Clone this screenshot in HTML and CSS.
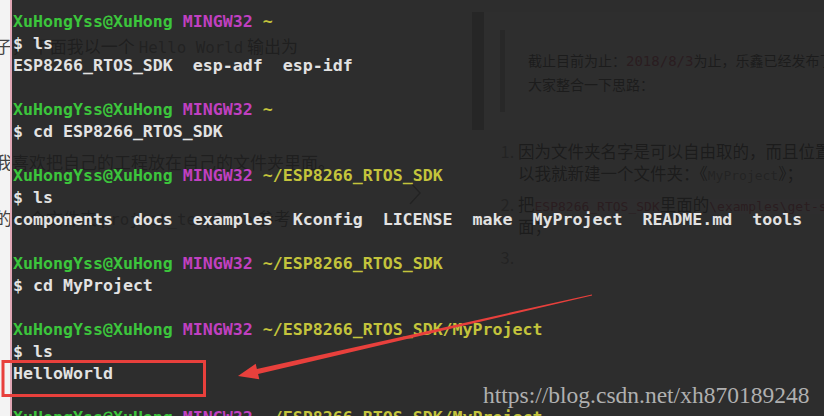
FILE: index.html
```html
<!DOCTYPE html>
<html lang="zh-CN">
<head>
  <meta charset="UTF-8">
  <title>MINGW32 ~/ESP8266_RTOS_SDK/MyProject</title>
  <link rel="stylesheet" href="styles.css">
</head>
<body>
  <!-- 背后的博客编辑器：左边源码，右边预览 -->
  <div class="editor">
    <section class="source">
      <p>子，&nbsp;下面我以一个 <code>Hello World</code> 输出为</p>
      <p>我喜欢把自己的工程放在自己的文件夹里面。</p>
      <p>的一个文件夹 <code>project_template</code> 参考</p>
    </section>
    <div class="splitter">
      <svg width="16" height="26" viewBox="0 0 16 26"><polyline points="3,2 13,13 3,24"/></svg>
    </div>
    <section class="preview">
      <blockquote class="note">
        <blockquote>截止目前为止：<code>2018/8/3</code>为止，乐鑫已经发布了 ESP8266_RTOS_SDK 的 3.0 版本，所以下面给<br>大家整合一下思路：</blockquote>
      </blockquote>
      <ol class="steps">
        <li>因为文件夹名字是可以自由取的，而且位置也是可以随意放置的，所<br>以我就新建一个文件夹：《<code>MyProject</code>》；</li>
        <li>把<code class="red">ESP8266_RTOS_SDK</code>里面的<code class="red">\examples\get-started\project_template</code>拷贝到这个文件夹里<br>面；</li>
        <li></li>
      </ol>
    </section>
  </div>

  <!-- 半透明的终端窗口 -->
  <pre class="terminal"><span class="user">XuHongYss@XuHong</span> <span class="host">MINGW32</span> <span class="path">~</span>
$ ls
ESP8266_RTOS_SDK  esp-adf  esp-idf

<span class="user">XuHongYss@XuHong</span> <span class="host">MINGW32</span> <span class="path">~</span>
$ cd ESP8266_RTOS_SDK

<span class="user">XuHongYss@XuHong</span> <span class="host">MINGW32</span> <span class="path">~/ESP8266_RTOS_SDK</span>
$ ls
components  docs  examples  Kconfig  LICENSE  make  MyProject  README.md  tools

<span class="user">XuHongYss@XuHong</span> <span class="host">MINGW32</span> <span class="path">~/ESP8266_RTOS_SDK</span>
$ cd MyProject

<span class="user">XuHongYss@XuHong</span> <span class="host">MINGW32</span> <span class="path">~/ESP8266_RTOS_SDK/MyProject</span>
$ ls
HelloWorld

<span class="user">XuHongYss@XuHong</span> <span class="host">MINGW32</span> <span class="path">~/ESP8266_RTOS_SDK/MyProject</span></pre>

  <!-- 标注：红框和箭头 -->
  <svg class="marks" width="824" height="416" viewBox="0 0 824 416">
    <rect x="3" y="361.5" width="201.5" height="34" />
    <polygon points="591.9,294.4 256.9,369.1 255.7,363.7 238,376 259.3,379.3 258.1,373.9 592.1,295.6" />
  </svg>

  <div class="watermark">https://blog.csdn.net/xh870189248</div>
</body>
</html>
```

FILE: styles.css
```css
body{
  margin: 0;
  width: 824px;
  height: 416px;
  overflow: hidden;
  position: relative;
  background: #f3f3f3;
  font-family: "Noto Sans CJK SC", sans-serif;
}

/*背后的编辑器*/
.editor{
  display: flex;
  width: 1200px;
  margin-left: -5px;
}
.source{
  flex: none;
  width: 410px;
  padding-top: 32px;
  font-size: 17px;
  line-height: 28px;
  color: #444;
}
.source p{
  margin: 0 0 28px;
  white-space: nowrap;
}
.source p:first-child{
  margin-bottom: 88px;
}
.source code{
  font-family: "DejaVu Sans Mono", monospace;
  font-size: 15.8px;
  line-height: 1;
  color: #666;
}
.splitter{
  flex: none;
  width: 67px;
  box-sizing: border-box;
  padding: 180px 0 0 2px;
}
.splitter polyline{
  fill: none;
  stroke: #6a6a6a;
  stroke-width: 1.5;
}
.preview{
  flex: none;
  width: 720px;
  padding-top: 12px;
}
.note{
  margin: 0;
  padding: 18px 0 18px 16px;
  border-left: 12px solid #999;
  background: #f8f8f8;
}
.note blockquote{
  margin: 0;
  padding: 18px 0 16px 23px;
  border-left: 5px solid #b3b3b3;
  font-size: 14px;
  line-height: 24px;
  color: #1e1e1e;
  white-space: nowrap;
}
.note code{
  font-family: "DejaVu Sans Mono", monospace;
  font-size: 14px;
  line-height: 1;
  color: #c7254e;
}
.steps{
  margin: 10px 0 0;
  padding-left: 46px;
  font-size: 16.5px;
  line-height: 22px;
  color: #222;
  white-space: nowrap;
}
.steps li + li{
  margin-top: 9px;
}
.steps li::marker{
  color: #777;
}
.steps code{
  font-family: "DejaVu Sans Mono", monospace;
  font-size: 13px;
  line-height: 1;
  color: #777;
}
.steps code.red{
  color: #c7254e;
  background: #f9f2f4;
}

/*终端窗口*/
.terminal{
  position: absolute;
  top: 0;
  left: 10px;
  right: 0;
  bottom: 0;
  margin: 0;
  padding: 11px 0 0 1px;
  border-left: 2px solid #e0a6b4;
  background: rgba(28, 28, 28, 0.92);
  font-family: "DejaVu Sans Mono", monospace;
  font-size: 16.6px;
  font-weight: bold;
  line-height: 22px;
  color: #e2e2e2;
  white-space: pre;
  overflow: hidden;
}
.user{ color: #3cc53c; }
.host{ color: #c040c0; }
.path{ color: #c4c43c; }

/*标注*/
.marks{
  position: absolute;
  top: 0;
  left: 0;
  pointer-events: none;
}
.marks rect{
  fill: none;
  stroke: #e8403c;
  stroke-width: 3;
}
.marks polygon{
  fill: #e8403c;
}

.watermark{
  position: absolute;
  left: 483px;
  top: 384px;
  font-family: "Liberation Serif", serif;
  font-size: 23.5px;
  line-height: 1;
  color: #b0b0b0;
  white-space: nowrap;
}
```
